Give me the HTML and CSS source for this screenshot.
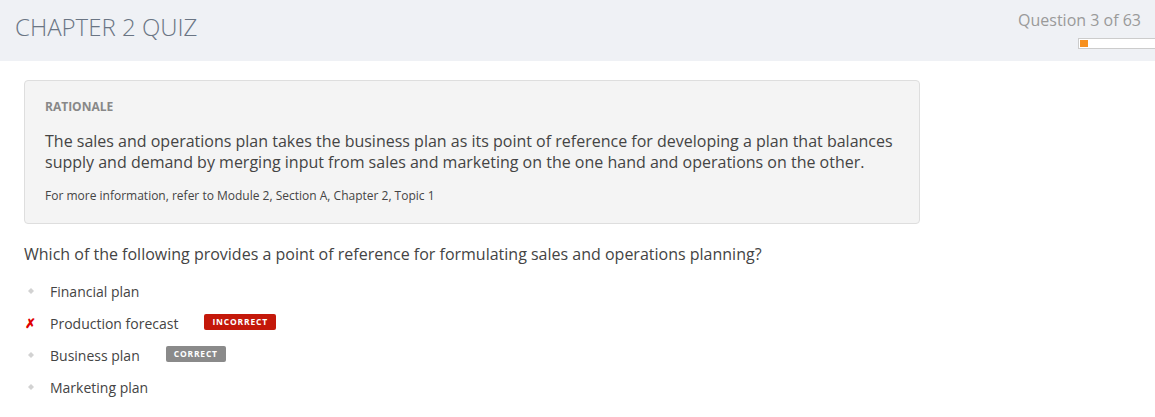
FILE: index.html
```html
<!DOCTYPE html>
<html>
<head>
<meta charset="utf-8">
<link rel="stylesheet" href="styles.css">
</head>
<body>
<header class="header">
  <h1 class="title">CHAPTER 2 QUIZ</h1>
  <div class="progress-wrap">
    <div class="progress-label">Question 3 of 63</div>
    <div class="progress"><div class="progress-fill" style="width:8px"></div></div>
  </div>
</header>
<main class="main">
  <section class="rationale">
    <div class="rationale-label">RATIONALE</div>
    <p class="rationale-text">The sales and operations plan takes the business plan as its point of reference for developing a plan that balances supply and demand by merging input from sales and marketing on the one hand and operations on the other.</p>
    <p class="rationale-ref">For more information, refer to Module 2, Section A, Chapter 2, Topic 1</p>
  </section>
  <p class="question">Which of the following provides a point of reference for formulating sales and operations planning?</p>
  <ul class="options">
    <li class="option"><span class="mark"><svg class="dot" width="6" height="6" viewBox="0 0 6 6"><path d="M3 0 L6 3 L3 6 L0 3 Z"/></svg></span><span class="opt-text">Financial plan</span></li>
    <li class="option"><span class="mark cross">&#x2717;</span><span class="opt-text">Production forecast</span><span class="badge badge-incorrect">INCORRECT</span></li>
    <li class="option"><span class="mark"><svg class="dot" width="6" height="6" viewBox="0 0 6 6"><path d="M3 0 L6 3 L3 6 L0 3 Z"/></svg></span><span class="opt-text">Business plan</span><span class="badge badge-correct">CORRECT</span></li>
    <li class="option"><span class="mark"><svg class="dot" width="6" height="6" viewBox="0 0 6 6"><path d="M3 0 L6 3 L3 6 L0 3 Z"/></svg></span><span class="opt-text">Marketing plan</span></li>
  </ul>
</main>
</body>
</html>
```
FILE: styles.css
```css
* { box-sizing: border-box; }
body {
  margin: 0;
  font-family: "Open Sans", "Liberation Sans", sans-serif;
  background: #fff;
  color: #444;
}
.header {
  height: 61px;
  background: #eff1f5;
  display: flex;
  justify-content: space-between;
  align-items: flex-start;
  padding: 0 0 0 15px;
}
.title {
  margin: 12px 0 0;
  font-weight: 300;
  font-size: 24px;
  line-height: 30px;
  color: #6a7584;
  letter-spacing: 0;
}
.progress-wrap {
  display: flex;
  flex-direction: column;
  align-items: flex-end;
  padding-top: 9px;
}
.progress-label {
  font-size: 16px;
  line-height: 22px;
  color: #9a9a9a;
  padding-right: 14px;
}
.progress {
  margin-top: 7px;
  width: 77px;
  height: 11px;
  background: #fff;
  border: 1px solid #ccc;
  border-right: none;
  padding: 1px;
}
.progress-fill {
  height: 100%;
  background: #f7901e;
}
.main {
  padding: 19px 0 0 24px;
  width: 920px;
}
.rationale {
  background: #f4f4f4;
  border: 1px solid #dedede;
  border-radius: 4px;
  padding: 18px 20px 19px 20px;
  width: 896px;
}
.rationale-label {
  font-size: 12px;
  font-weight: 700;
  color: #888;
  line-height: 16px;
}
.rationale-text {
  margin: 16px 0 0;
  font-size: 16px;
  line-height: 21px;
  color: #444;
}
.rationale-ref {
  margin: 14px 0 0;
  font-size: 12px;
  line-height: 17px;
  color: #444;
}
.question {
  margin: 19px 0 0;
  font-size: 16px;
  line-height: 22px;
  color: #444;
}
.options {
  list-style: none;
  margin: 10px 0 0;
  padding: 0;
}
.option {
  display: flex;
  align-items: center;
  height: 32px;
  font-size: 14px;
  color: #444;
}
.mark {
  width: 26px;
  display: flex;
  align-items: center;
  padding-left: 4px;
}
.dot {
  fill: #d2d2d2;
}
.cross {
  font-size: 13px;
  color: #e00000;
  font-weight: 700;
  padding-left: 1px;
}
.badge {
  display: inline-block;
  font-size: 8.5px;
  font-weight: 700;
  letter-spacing: 0.8px;
  color: #fff;
  border-radius: 2px;
  height: 16px;
  line-height: 16px;
  padding: 0 8px;
  margin-top: -2px;
}
.badge-incorrect {
  background: #c4180a;
  margin-left: 26px;
}
.badge-correct {
  background: #8a8a8a;
  margin-left: 26px;
}
```
